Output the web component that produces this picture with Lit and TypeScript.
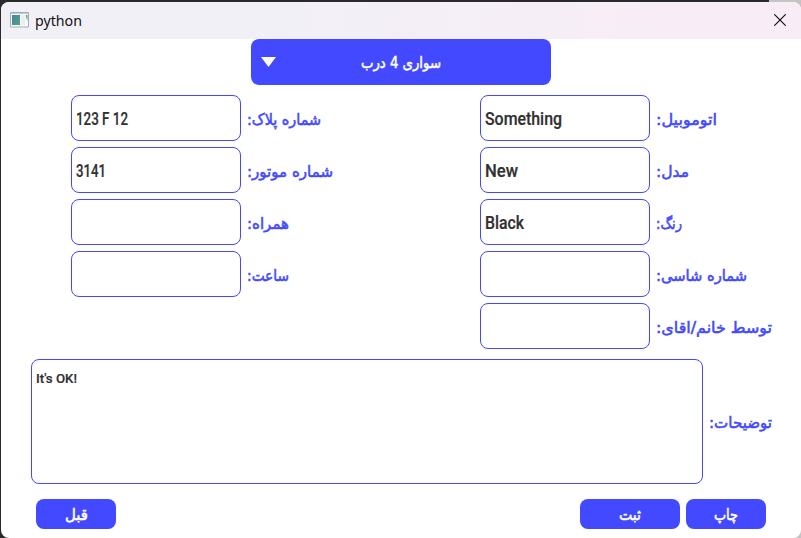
import { LitElement, html, css, svg } from "lit";
import { customElement, property } from "lit/decorators.js";

/** One line of text condensed or widened to a known width. */
@customElement("fit-text")
class FitText extends LitElement {
  @property() text = "";
  @property({ type: Number }) width = 0;
  @property({ type: Number }) height = 46;
  @property({ type: Number }) baseline = 30;

  static styles = css`
    :host { display: block; flex: none; }
    svg { display: block; overflow: visible; }
    text { fill: currentColor; stroke: currentColor; stroke-width: var(--weight, 0); }
  `;

  render() {
    const rtl = /[\u0600-\u06ff]/.test(this.text);
    return html`<svg width=${this.width} height=${this.height}>
      ${svg`<text x=${rtl ? this.width : 0} y=${this.baseline} direction=${rtl ? "rtl" : "ltr"}
        textLength=${this.width} lengthAdjust="spacingAndGlyphs">${this.text}</text>`}
    </svg>`;
  }
}

interface Field { label: string; labelWidth: number; value?: string; valueWidth?: number; }

const leftFields: Field[] = [
  { label: "شماره پلاک:", labelWidth: 74, value: "123 F 12", valueWidth: 52 },
  { label: "شماره موتور:", labelWidth: 86, value: "3141", valueWidth: 30 },
  { label: "همراه:", labelWidth: 42 },
  { label: "ساعت:", labelWidth: 42 },
];

const rightFields: Field[] = [
  { label: "اتوموبیل:", labelWidth: 61, value: "Something", valueWidth: 77 },
  { label: "مدل:", labelWidth: 33, value: "New", valueWidth: 33 },
  { label: "رنگ:", labelWidth: 26, value: "Black", valueWidth: 39 },
  { label: "شماره شاسی:", labelWidth: 91 },
  { label: "توسط خانم/اقای:", labelWidth: 116 },
];

@customElement("app-root")
class AppRoot extends LitElement {
  static styles = css`
    :host {
      display: block;
      box-sizing: border-box;
      width: 801px;
      height: 538px;
      padding: 2px 0 0 1px;
      overflow: hidden;
      background: linear-gradient(90deg, #2b2a2b 0 769px, #c4c4c4 769px);
      font-family: "DejaVu Sans", "Noto Sans", sans-serif;
    }
    * { box-sizing: border-box; }
    .window {
      height: 536px;
      border-radius: 8px;
      overflow: hidden;
      background: #fff;
      display: flex;
      flex-direction: column;
    }
    .title {
      height: 37px;
      flex: none;
      display: flex;
      align-items: center;
      padding: 0 15px 0 9px;
      background: linear-gradient(100deg, #f2f0f7 0 35%, #f8edf6 85%);
    }
    .title .name {
      flex: 1;
      margin-left: 6px;
      color: #111;
      font-family: "Noto Sans", sans-serif;
      font-size: 14.2px;
    }
    .title svg { display: block; margin-bottom: 1px; }
    .combo {
      width: 300px;
      height: 46px;
      flex: none;
      margin-left: 250px;
      padding-left: 10px;
      border-radius: 8px;
      background: #4249ff;
      color: #fff;
      display: flex;
      align-items: center;
      gap: 85px;
    }
    .ar { font-weight: 400; font-size: 15.5px; --weight: 0.55px; }
    .form {
      display: grid;
      grid-template-columns: 409px 1fr;
      margin-top: 10px;
      padding-left: 70px;
    }
    .column { display: flex; flex-direction: column; gap: 6px; }
    .row { display: flex; gap: 6px; color: #4249ff; }
    .box {
      width: 170px;
      height: 46px;
      border: 1px solid #4249ff;
      border-radius: 8px;
      padding-left: 4px;
      color: #303030;
      font: 500 17.5px Roboto, sans-serif;
      --weight: 0.2px;
      overflow: hidden;
    }
    .notes { display: flex; align-items: center; gap: 6px; margin: 10px 0 0 30px; color: #4249ff; }
    .area { width: 672px; height: 125px; font-size: 13.5px; }
    .actions { display: flex; gap: 6px; margin: 15px 35px 0; }
    .button {
      width: 80px;
      height: 30px;
      border-radius: 8px;
      background: #4249ff;
      color: #fff;
      display: flex;
      justify-content: center;
    }
    .wide { width: 100px; margin-left: auto; }
  `;

  private column(fields: Field[]) {
    return html`<div class="column">
      ${fields.map((f) => html`<div class="row">
        <div class="box">
          ${f.value ? html`<fit-text text=${f.value} width=${f.valueWidth!} baseline="29"></fit-text>` : ""}
        </div>
        <fit-text class="ar" text=${f.label} width=${f.labelWidth}></fit-text>
      </div>`)}
    </div>`;
  }

  render() {
    return html`<div class="window">
      <div class="title">
        <svg width="19" height="16" viewBox="0 0 19 16">
          <defs>
            <linearGradient id="g" x1="0" y1="0" x2="1" y2="1">
              <stop offset="0" stop-color="#4c7fa5" /><stop offset="1" stop-color="#4fa57e" />
            </linearGradient>
          </defs>
          <path d="M.5 .5h18v14.500h-18z" fill="#f6f8fa" stroke="#a7abb7" />
          <path d="M1 1.500h17" stroke="#c4c9d6" />
          <path d="M2 3h8v10H2z" fill="url(#g)" />
          <path d="M11 3h4v10h-4z" fill="#e9efed" />
          <path d="M16 3h1.500v6L16 5z" fill="#55a57c" />
        </svg>
        <span class="name">python</span>
        <svg width="12" height="12" viewBox="0 0 12 12">
          <path d="M.3 .3 11.700 11.700M11.700 .3 .3 11.700" stroke="#111" stroke-width="1.200" />
        </svg>
      </div>
      <div class="combo">
        <svg width="15" height="10" viewBox="0 0 15 10"><path d="M0 0h15L7.500 10z" fill="#fff" /></svg>
        <fit-text class="ar" text="سواری 4 درب" width="80" baseline="29"></fit-text>
      </div>
      <div class="form">${this.column(leftFields)}${this.column(rightFields)}</div>
      <div class="notes">
        <div class="box area"><fit-text text="It's OK!" width="41" baseline="23"></fit-text></div>
        <fit-text class="ar" text="توضیحات:" width="63" baseline="29"></fit-text>
      </div>
      <div class="actions">
        <div class="button"><fit-text class="ar" text="قبل" width="23" height="30" baseline="21"></fit-text></div>
        <div class="button wide"><fit-text class="ar" text="ثبت" width="22" height="30" baseline="21"></fit-text></div>
        <div class="button"><fit-text class="ar" text="چاپ" width="24" height="30" baseline="21"></fit-text></div>
      </div>
    </div>`;
  }
}
